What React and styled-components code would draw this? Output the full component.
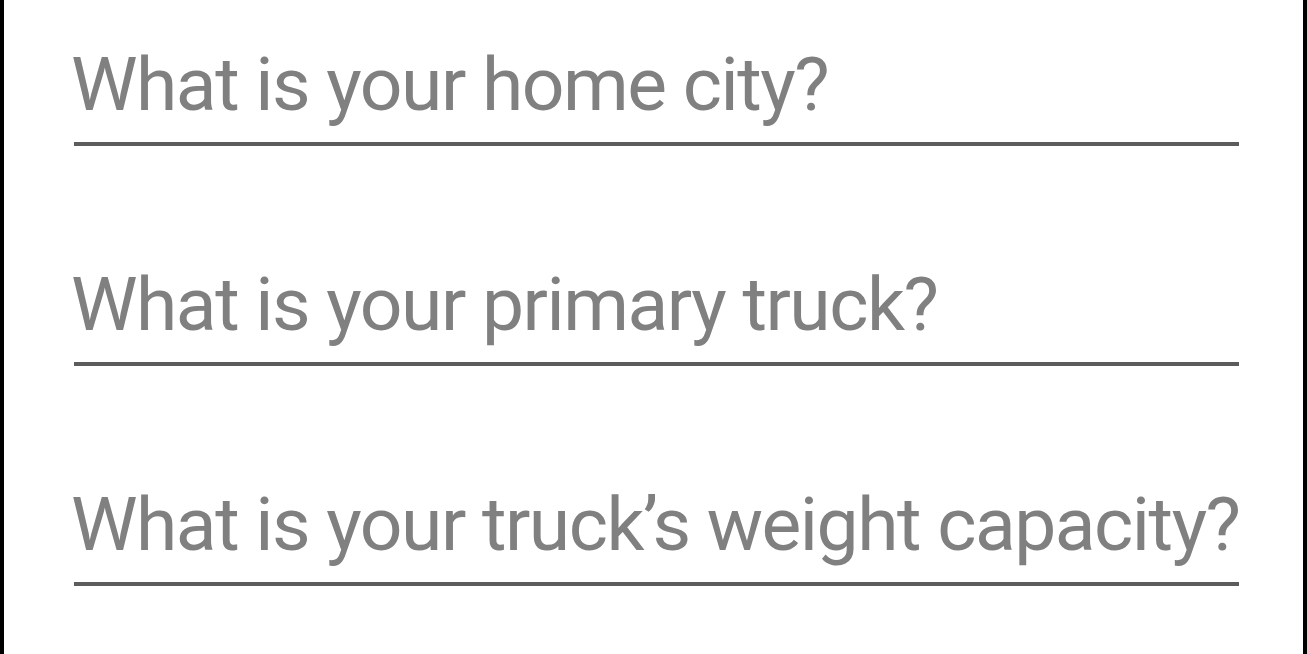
import React from "react";
import styled, { createGlobalStyle } from "styled-components";

const GlobalStyle = createGlobalStyle`
  html, body {
    margin: 0;
    padding: 0;
    background: #ffffff;
  }
  body {
    font-family: Roboto, "Noto Sans", sans-serif;
  }
`;

const Page = styled.div`
  box-sizing: border-box;
  height: 654px;
  border-left: 4px solid #000;
  border-right: 4px solid #000;
  padding: 40px 0 0 70px;
  display: flex;
  flex-direction: column;
  gap: 114px;
`;

const Field = styled.div`
  width: 1165px;
  border-bottom: 4px solid #5c5c5c;
  padding-bottom: 14px;
`;

const Question = styled.div`
  font-family: Roboto, sans-serif;
  font-size: 75px;
  line-height: 88px;
  letter-spacing: -1.5px;
  color: #808080;
  margin-left: -3px;
  white-space: nowrap;
`;

const questions = [
  "What is your home city?",
  "What is your primary truck?",
  "What is your truck\u2019s weight capacity?",
];

function App() {
  return (
    <>
      <GlobalStyle />
      <Page>
        {questions.map((q) => (
          <Field key={q}>
            <Question>{q}</Question>
          </Field>
        ))}
      </Page>
    </>
  );
}

export default App;
